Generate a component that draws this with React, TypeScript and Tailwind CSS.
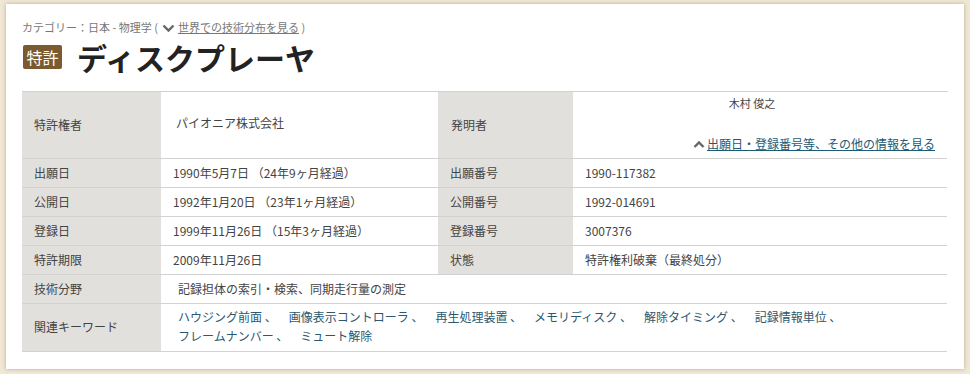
import React from 'react';

const labelCls =
  'flex items-center bg-[#e2e0dc] border-b border-[#d2d2d2] pl-[12px] text-[#444]';
const valueCls = 'flex items-center bg-white border-b border-[#d2d2d2] pl-[12px] text-[#444]';

const keywords = [
  'ハウジング前面',
  '画像表示コントローラ',
  '再生処理装置',
  'メモリディスク',
  '解除タイミング',
  '記録情報単位',
  'フレームナンバー',
  'ミュート解除',
];

function ChevronDown() {
  return (
    <svg width="13" height="9" viewBox="0 0 13 9" className="mr-[3px] ml-[4px] inline-block align-[-1px]">
      <path d="M1.5 1.5 L6.5 6.5 L11.5 1.5" fill="none" stroke="#666" strokeWidth="2.4" />
    </svg>
  );
}

function ChevronUp() {
  return (
    <svg width="12" height="9" viewBox="0 0 12 9" className="mr-[2px] inline-block align-[0px]">
      <path d="M1.5 7 L6 2.5 L10.5 7" fill="none" stroke="#666" strokeWidth="2.4" />
    </svg>
  );
}

function SimpleRow({ l1, v1, l2, v2 }: { l1: string; v1: string; l2: string; v2: string }) {
  return (
    <>
      <div className={`${labelCls} h-[29px]`}>{l1}</div>
      <div className={`${valueCls} h-[29px]`}>{v1}</div>
      <div className={`${labelCls} h-[29px]`}>{l2}</div>
      <div className={`${valueCls} h-[29px]`}>{v2}</div>
    </>
  );
}

export default function App() {
  return (
    <div className="h-[374px] w-[970px] bg-[#f0e7d5] pt-[4px] pl-[6px] font-['Noto_Sans_CJK_JP',sans-serif]">
      <div className="w-[958px] bg-white px-[16px] pt-[13px] pb-[17px] shadow-[0_0_4px_rgba(120,100,70,0.45)]">
        <div className="text-[11px] leading-[20px] text-[#777]">
          カテゴリー：日本 - 物理学 (
          <ChevronDown />
          <span className="underline">世界での技術分布を見る</span> )
        </div>
        <div className="mt-[2px] flex h-[36px] items-center">
          <span className="ml-[1px] flex h-[24px] w-[39px] items-center justify-center rounded-[2px] bg-[#7b5a2f] text-[16px] text-white">
            特許
          </span>
          <h1 className="ml-[15px] text-[30px] font-bold leading-[36px] text-[#222]">ディスクプレーヤ</h1>
        </div>

        <div className="mt-[16px] grid grid-cols-[139px_277px_135px_374px] border-t border-[#d2d2d2] text-[12px] leading-[18px]">
          <div className={`${labelCls} h-[67px]`}>特許権者</div>
          <div className={`${valueCls} h-[67px] pl-[15px] pb-[4px] text-[#3d5b6b]`}>パイオニア株式会社</div>
          <div className={`${labelCls} h-[67px] pl-[13px]`}>発明者</div>
          <div className="flex h-[67px] flex-col justify-between border-b border-[#d2d2d2] bg-white pt-[2px] pb-[5px] pr-[12px]">
            <div className="pr-[4px] text-center text-[11px] text-[#444]">木村 俊之</div>
            <div className="text-right text-[#1f5a73]">
              <ChevronUp />
              <span className="underline">出願日・登録番号等、その他の情報を見る</span>
            </div>
          </div>

          <SimpleRow l1="出願日" v1="1990年5月7日 （24年9ヶ月経過）" l2="出願番号" v2="1990-117382" />
          <SimpleRow l1="公開日" v1="1992年1月20日 （23年1ヶ月経過）" l2="公開番号" v2="1992-014691" />
          <SimpleRow l1="登録日" v1="1999年11月26日 （15年3ヶ月経過）" l2="登録番号" v2="3007376" />
          <SimpleRow l1="特許期限" v1="2009年11月26日" l2="状態" v2="特許権利破棄（最終処分）" />

          <div className={`${labelCls} h-[29px]`}>技術分野</div>
          <div className={`${valueCls} col-span-3 h-[29px] pl-[17px] text-[#2b5870]`}>
            記録担体の索引・検索、同期走行量の測定
          </div>

          <div className={`${labelCls} h-[48px] pb-[2px]`}>関連キーワード</div>
          <div className="col-span-3 flex h-[48px] items-center border-b border-[#d2d2d2] bg-white pl-[17px] pb-[4px] text-[#2b5870] leading-[19px]">
            <div className="flex flex-wrap">
              {keywords.map((k, i) => (
                <span key={k} className="mr-[12px] whitespace-nowrap">
                  {i < keywords.length - 1 ? `${k} 、` : k}
                </span>
              ))}
            </div>
          </div>
        </div>
      </div>
    </div>
  );
}
